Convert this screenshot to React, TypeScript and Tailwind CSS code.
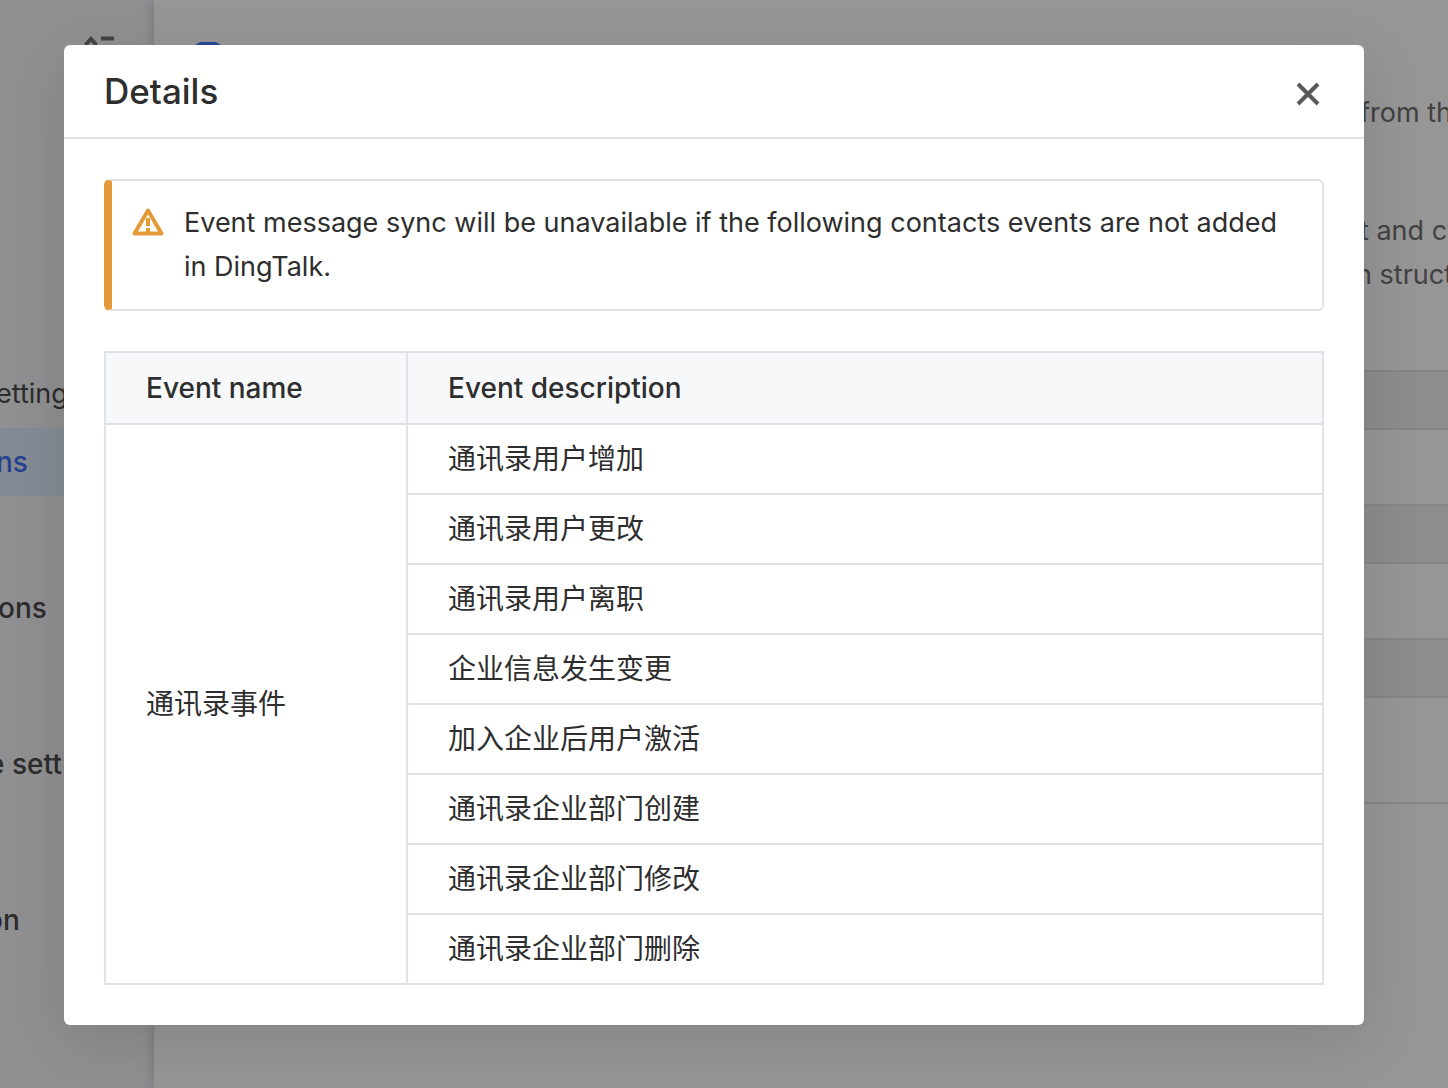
const events = [
  '通讯录用户增加',
  '通讯录用户更改',
  '通讯录用户离职',
  '企业信息发生变更',
  '加入企业后用户激活',
  '通讯录企业部门创建',
  '通讯录企业部门修改',
  '通讯录企业部门删除',
];

function Sidebar() {
  return (
    <nav className="w-[154px] shrink-0 overflow-hidden whitespace-nowrap bg-[#f5f5f8] font-medium text-[#4c4c4c]">
      <div className="flex h-[360px] justify-end pr-9 pt-8">
        <svg width="36" height="32" viewBox="0 0 36 32" fill="none" stroke="#757575" strokeWidth="4" aria-hidden="true">
          <path d="M3.500 13 9 7l5.500 6M3.500 20 9 26l5.500-6M19 6.500h13M19 16.500h13M19 26.500h13" />
        </svg>
      </div>
      <a href="#settings" className="-ml-1 flex h-[68px] items-center text-[27px] font-normal">etting</a>
      <a href="#integrations" className="flex h-[68px] items-center bg-[#e3ecfc] text-[#4272f5]">
        <span className="-ml-1">ns</span>
      </a>
      <a href="#permissions" className="mt-[78px] -ml-0.5 flex h-[68px] items-center">ons</a>
      <a href="#service" className="mt-[88px] -ml-3 flex h-[68px] items-center">e sett</a>
      <a href="#authentication" className="mt-[88px] -ml-3.5 flex h-[68px] items-center">on</a>
    </nav>
  );
}

function Page() {
  return (
    <div className="flex min-h-screen overflow-hidden" aria-hidden="true">
      <Sidebar />
      <main className="min-w-0 flex-1 bg-white text-[27px] text-[#707070] shadow-[0_0_12px_rgba(0,0,0,0.2)]">
        <div className="h-[91px] pl-10 pt-[42px]">
          <div className="size-7 rounded-lg bg-[#4a7cff]" />
        </div>
        <div className="ml-auto h-[279px] w-[88px] whitespace-nowrap leading-[44px]">
          <p>from th</p>
          <p className="mt-[74px]">t and c</p>
          <p className="-ml-1">n struct</p>
        </div>
        <div className="h-[60px] border-y-2 border-[#e2e2e4] bg-[#f0f0f3]" />
        <div className="h-[74px]" />
        <div className="h-[60px] border-y-2 border-[#e2e2e4] bg-[#f0f0f3]" />
        <div className="h-[74px]" />
        <div className="h-[60px] border-y-2 border-[#e2e2e4] bg-[#f0f0f3]" />
        <div className="h-[106px] border-b-2 border-[#e2e2e4]" />
      </main>
    </div>
  );
}

function Notice() {
  return (
    <div
      role="alert"
      className="flex gap-5 rounded-md border-2 border-l-8 border-[#e1e2e7] border-l-[#e59a38] px-5 py-5 text-[27px] leading-[44px]"
    >
      <svg className="mt-1 shrink-0" width="32" height="34" viewBox="0 0 32 34" fill="none" aria-hidden="true">
        <path d="M16 5.500 29.500 28.500h-27Z" stroke="#e59a38" strokeWidth="4" strokeLinejoin="round" />
        <path d="M16 13v8M16 23v5" stroke="#e59a38" strokeWidth="4" />
      </svg>
      <p>Event message sync will be unavailable if the following contacts events are not added in DingTalk.</p>
    </div>
  );
}

function EventTable() {
  return (
    <table className="mt-10 w-full table-fixed border-collapse text-left">
      <colgroup>
        <col className="w-[302px]" />
        <col />
      </colgroup>
      <thead>
        <tr className="h-[72px] bg-[#f7f8fa]">
          <th scope="col" className="border-2 border-[#e0e1e6] px-10 font-medium">Event name</th>
          <th scope="col" className="border-2 border-[#e0e1e6] px-10 font-medium">Event description</th>
        </tr>
      </thead>
      <tbody>
        {events.map((event, i) => (
          <tr key={event} className="h-[70px]">
            {i === 0 && (
              <td rowSpan={events.length} className="border-2 border-[#e0e1e6] px-10">
                通讯录事件
              </td>
            )}
            <td className="border-2 border-[#e0e1e6] px-10">{event}</td>
          </tr>
        ))}
      </tbody>
    </table>
  );
}

export default function App() {
  return (
    <div lang="zh-CN" className="relative font-['Inter','Noto_Sans_CJK_SC',sans-serif] text-[28px] leading-10">
      <Page />
      <div className="absolute inset-0 bg-black/41 pb-[63px] pl-16 pr-[84px] pt-[45px]">
        <section
          role="dialog"
          aria-modal="true"
          aria-labelledby="dialog-title"
          className="rounded-md bg-white text-[#2e2e2e] shadow-[0_16px_64px_rgba(0,0,0,0.12)]"
        >
          <header className="flex h-[94px] items-center justify-between border-b-2 border-[#e1e2e7] px-10">
            <h2 id="dialog-title" className="text-[35px] font-medium">Details</h2>
            <button type="button" aria-label="Close" className="mt-1.5">
              <svg width="32" height="32" viewBox="0 0 32 32" fill="none" stroke="#58595b" strokeWidth="4" aria-hidden="true">
                <path d="m6 6 20 20M26 6 6 26" />
              </svg>
            </button>
          </header>
          <div className="p-10">
            <Notice />
            <EventTable />
          </div>
        </section>
      </div>
    </div>
  );
}
